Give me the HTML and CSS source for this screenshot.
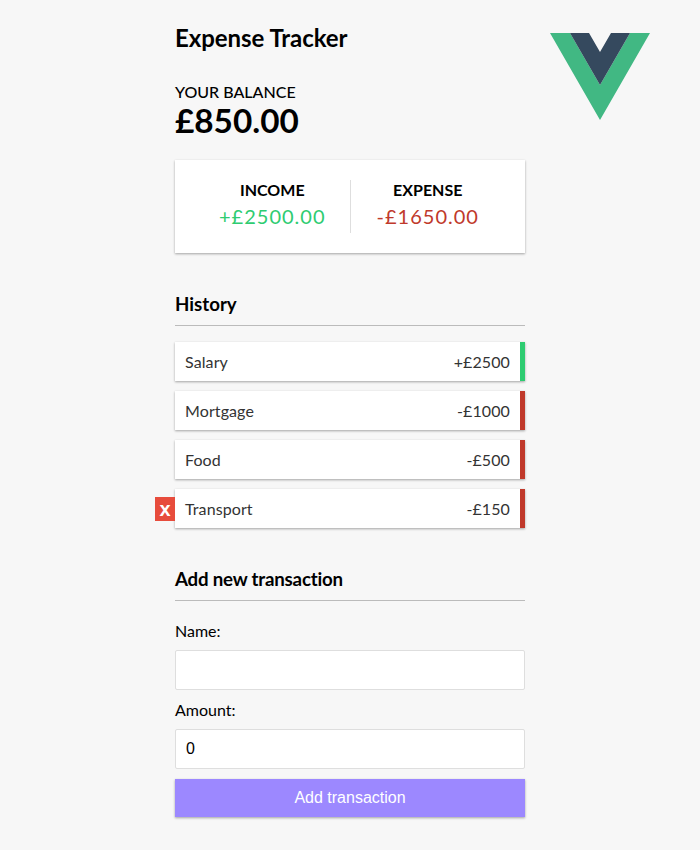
FILE: index.html
```html
<!DOCTYPE html>
<html lang="en">
<head>
<meta charset="utf-8">
<title>Expense Tracker</title>
<link rel="stylesheet" href="styles.css">
</head>
<body>
<div class="page">
  <main class="container">
    <h1 class="title">Expense Tracker</h1>
    <h4 class="balance-label">Your Balance</h4>
    <p class="balance">£850.00</p>
    <section class="summary">
      <div class="summary-col">
        <h4 class="summary-label">Income</h4>
        <p class="money money-plus">+£2500.00</p>
      </div>
      <div class="summary-col">
        <h4 class="summary-label">Expense</h4>
        <p class="money money-minus">-£1650.00</p>
      </div>
    </section>
    <h3 class="section-title section-title-list">History</h3>
    <ul class="list">
      <li class="item plus"><span>Salary</span><span>+£2500</span></li>
      <li class="item minus"><span>Mortgage</span><span>-£1000</span></li>
      <li class="item minus"><span>Food</span><span>-£500</span></li>
      <li class="item minus"><button class="delete-btn" type="button">x</button><span>Transport</span><span>-£150</span></li>
    </ul>
    <h3 class="section-title section-title-tight">Add new transaction</h3>
    <form class="form">
      <label class="label" for="name">Name:</label>
      <input class="input" id="name" type="text">
      <label class="label" for="amount">Amount:</label>
      <input class="input" id="amount" type="text" value="0">
      <button class="btn" type="button">Add transaction</button>
    </form>
  </main>
  <aside class="logo-col">
    <svg class="logo" viewBox="0 0 100 87" width="100" height="87" aria-label="Vue logo">
      <path fill="#41b883" d="M0 0H20L50 52 80 0H100L50 87Z"/>
      <path fill="#35495e" d="M20 0H39L50 19 61 0H80L50 52Z"/>
    </svg>
  </aside>
</div>
</body>
</html>
```
FILE: styles.css
```css
* { box-sizing: border-box; }

html, body { margin: 0; padding: 0; }

body {
  background: #f7f7f7;
  color: #000;
  font-family: Lato, "Liberation Sans", sans-serif;
  font-size: 18px;
}

.page {
  display: grid;
  grid-template-columns: 175px 350px 1fr;
}

.container {
  grid-column: 2;
  padding-top: 23px;
}

.logo-col {
  grid-column: 3;
  padding: 33px 0 0 25px;
}

.logo { display: block; }

.title {
  margin: 0 0 30px;
  font-size: 24px;
  line-height: 29px;
  font-weight: 700;
  letter-spacing: -.05px;
}

.balance-label {
  margin: 0;
  font-size: 16px;
  line-height: 19px;
  font-weight: 500;
  text-transform: uppercase;
}

.balance {
  margin: 0;
  font-size: 33.3px;
  line-height: 39px;
  font-weight: 700;
}

.summary {
  display: flex;
  margin: 20px 0;
  padding: 20px;
  background: #fff;
  box-shadow: 0 1px 3px rgba(0,0,0,.12), 0 1px 2px rgba(0,0,0,.24);
}

.summary-col { flex: 1; text-align: center; }
.summary-col:first-child { border-right: 1px solid #dedede; }

.summary-label {
  margin: 0;
  font-size: 16px;
  line-height: 19px;
  font-weight: 700;
  text-transform: uppercase;
}

.money {
  margin: 5px 0;
  font-size: 20px;
  line-height: 24px;
  letter-spacing: 1px;
}

.money-plus { color: #2ecc71; }
.money-minus { color: #c0392b; }

.section-title {
  margin: 40px 0 10px;
  padding-bottom: 10px;
  border-bottom: 1px solid #bbb;
  font-size: 18.72px;
  line-height: 22px;
  font-weight: 700;
}

.section-title-list { margin-bottom: 16px; }
.section-title-tight { letter-spacing: -.2px; }

.list {
  margin: 0 0 40px;
  padding: 0;
  list-style: none;
}

.item {
  position: relative;
  display: flex;
  justify-content: space-between;
  margin: 10px 0;
  padding: 10px;
  background: #fff;
  color: #333;
  font-size: 16px;
  line-height: 19px;
  letter-spacing: .1px;
  box-shadow: 0 1px 3px rgba(0,0,0,.12), 0 1px 2px rgba(0,0,0,.24);
}

.plus { border-right: 5px solid #2ecc71; }
.minus { border-right: 5px solid #c0392b; }

.delete-btn {
  position: absolute;
  top: 50%;
  left: 0;
  transform: translate(-100%, -50%);
  width: 20px;
  padding: 2px 0;
  border: 0;
  background: #e74c3c;
  color: #fff;
  font-family: "Liberation Sans", sans-serif;
  font-size: 20px;
  font-weight: 700;
  line-height: 20px;
  text-align: center;
}

.label {
  display: inline-block;
  margin: 10px 0;
  font-size: 16px;
  line-height: 19px;
}

.input {
  display: block;
  width: 100%;
  padding: 10px;
  border: 1px solid #dedede;
  border-radius: 2px;
  background: #fff;
  color: #000;
  font-family: "Liberation Sans", sans-serif;
  font-size: 16px;
}

.btn {
  display: block;
  width: 100%;
  margin: 10px 0 30px;
  padding: 10px;
  border: 0;
  background: #9c88ff;
  color: #fff;
  font-family: "Liberation Sans", sans-serif;
  font-size: 16px;
  box-shadow: 0 1px 3px rgba(0,0,0,.12), 0 1px 2px rgba(0,0,0,.24);
}
```
